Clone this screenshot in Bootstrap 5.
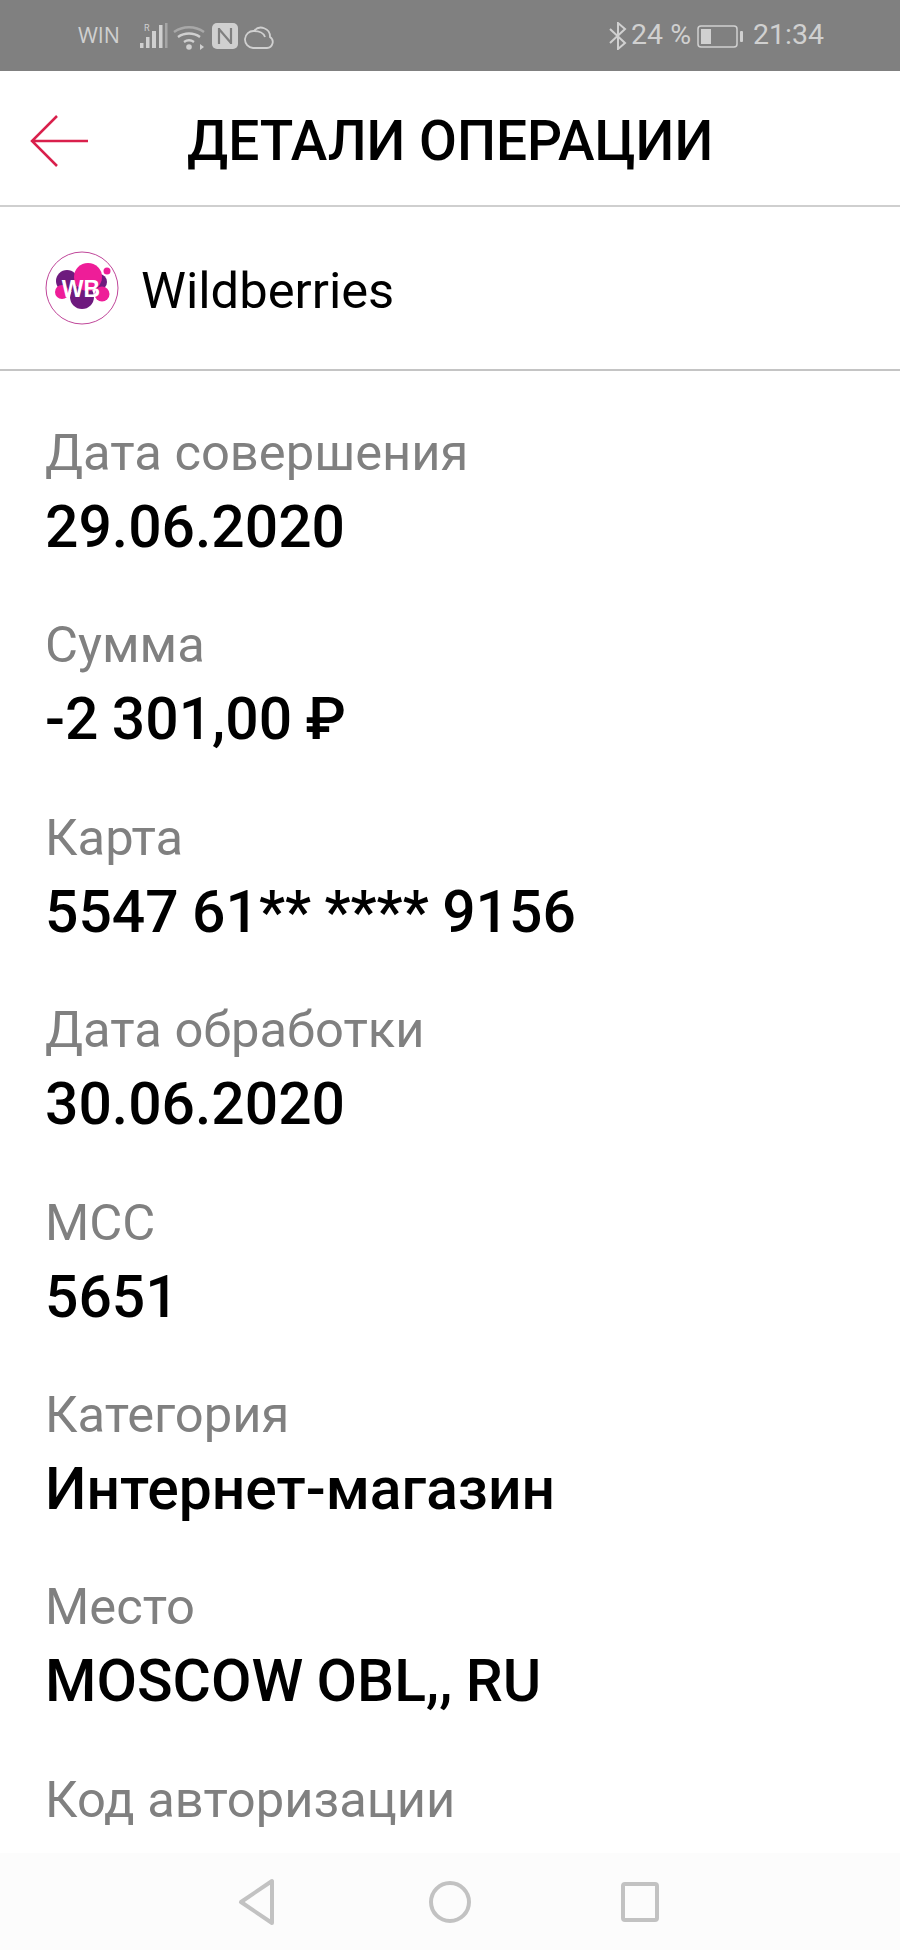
<!DOCTYPE html>
<html lang="ru">
<head>
<meta charset="utf-8">
<title>Детали операции</title>
<link href="https://cdn.jsdelivr.net/npm/bootstrap@5.3.0/dist/css/bootstrap.min.css" rel="stylesheet">
<style>
html,body{height:1950px;overflow:hidden}
body{font-family:Roboto,"Noto Sans",sans-serif;background:#fff;color:#000}
.phone{height:1950px;position:relative;overflow:hidden}
.statusbar{height:71px;background:#808080;color:#d0d0d0;padding-left:78px;padding-right:76px}
.st-win{font-family:"Open Sans",sans-serif;font-size:21.5px;margin-right:20px}
.st-right{font-size:28.5px;gap:4px}
.titlebar{height:136px;border-bottom:2px solid #cfcfcf;padding-left:30px;padding-top:6px}
.titlebar h1{font-family:Roboto,sans-serif;font-weight:500;font-size:55px;margin:0 0 0 99px;line-height:1}
.merchant{height:164px;border-bottom:2px solid #c4c4c4;padding-left:45px;gap:22px}
.merchant span{font-size:50.7px;line-height:1;padding-top:6px}
.fields{padding:55px 0 0 45px}
.field{height:192.4px}
.field-label{font-size:50.7px;line-height:54px;color:#808080}
.field-value{font-size:58.8px;line-height:62px;font-weight:500;margin-top:16px;word-spacing:-1.2px}
.navbottom{position:absolute;left:0;right:0;bottom:0;height:97px;background:#fcfcfc}
</style>
</head>
<body>
<div class="phone">
  <div class="statusbar d-flex align-items-center">
    <span class="st-win">WIN</span>
    <svg width="136" height="28" viewBox="0 0 136 28" fill="none">
      <g fill="#d0d0d0">
        <text x="4" y="9" font-size="9" font-family="Roboto">R</text>
        <rect x="0" y="21" width="3.500" height="5"/><rect x="6" y="15" width="3.500" height="11"/><rect x="12" y="9" width="4" height="17"/><rect x="19" y="3" width="3.500" height="23"/>
        <rect x="25" y="1" width="2.500" height="25" fill="#a6a6a6"/>
      </g>
      <g fill="none" stroke="#d0d0d0" stroke-width="2.400">
        <path d="M34 10a26 26 0 0 1 30 0" stroke="#a8a8a8"/>
        <path d="M38 15a19 19 0 0 1 22 0"/>
        <path d="M44 20a9 9 0 0 1 10 0"/>
      </g>
      <circle cx="49" cy="25" r="2.800" fill="#d0d0d0"/>
      <path d="M60 22l4 3-4 3z" fill="#d0d0d0"/>
      <rect x="72" y="1" width="26" height="26" rx="5" fill="#d0d0d0"/>
      <path d="M79 6v16M91 6v16M79 7l12 14" stroke="#808080" stroke-width="2.200" fill="none"/>
      <path d="M113 26h14a6 6 0 0 0 3-11 9 9 0 0 0-16-6 8.500 8.500 0 0 0-1 17zM114 9c5 0 10 2 11 6" stroke="#d0d0d0" stroke-width="1.800" fill="none"/>
    </svg>
    <div class="st-right d-flex align-items-center ms-auto">
      <svg width="18" height="28" viewBox="0 0 18 28" fill="none" stroke="#d0d0d0" stroke-width="2"><path d="M1 7l15 14-7 6V1l7 6L1 21"/></svg>
      <span>24 %</span>
      <svg class="me-1" width="50" height="24" viewBox="0 0 50 24" fill="none"><rect x="3" y="2" width="39" height="21" rx="3" stroke="#d0d0d0" stroke-width="1.500"/><rect x="6" y="5" width="10" height="15" fill="#d0d0d0"/><rect x="45" y="7" width="3" height="11" rx="1" fill="#d0d0d0"/></svg>
      <span>21:34</span>
    </div>
  </div>

  <div class="titlebar d-flex align-items-center">
    <svg width="58" height="52" viewBox="0 0 58 52" fill="none" stroke="#d9204c" stroke-width="2.500"><path d="M27 1L2 26l25 25M2 26h56"/></svg>
    <h1>ДЕТАЛИ ОПЕРАЦИИ</h1>
  </div>

  <div class="merchant d-flex align-items-center">
    <svg width="74" height="74" viewBox="0 0 74 74">
      <circle cx="37" cy="37" r="36" fill="#fff" stroke="#c0479a" stroke-width="1"/>
      <g fill="#6e1a7e"><circle cx="22" cy="30" r="11"/><circle cx="37" cy="46" r="12"/><circle cx="54" cy="31" r="8"/></g>
      <g fill="#ee1d98"><circle cx="43" cy="26" r="14"/><circle cx="17" cy="41" r="7"/><circle cx="57" cy="43" r="7.500"/><circle cx="62" cy="20" r="3.500"/></g>
      <text x="36" y="46" text-anchor="middle" font-family="Liberation Sans" font-weight="700" font-size="23" fill="#fff">WB</text>
    </svg>
    <span>Wildberries</span>
  </div>

  <div class="fields">
    <div class="field"><div class="field-label">Дата совершения</div><div class="field-value">29.06.2020</div></div>
    <div class="field"><div class="field-label">Сумма</div><div class="field-value">-2 301,00 ₽</div></div>
    <div class="field"><div class="field-label">Карта</div><div class="field-value">5547 61** **** 9156</div></div>
    <div class="field"><div class="field-label">Дата обработки</div><div class="field-value">30.06.2020</div></div>
    <div class="field"><div class="field-label">MCC</div><div class="field-value">5651</div></div>
    <div class="field"><div class="field-label">Категория</div><div class="field-value">Интернет-магазин</div></div>
    <div class="field"><div class="field-label">Место</div><div class="field-value">MOSCOW OBL,, RU</div></div>
    <div class="field"><div class="field-label">Код авторизации</div></div>
  </div>

  <div class="navbottom">
    <svg width="900" height="97" viewBox="0 0 900 97" fill="none" stroke="#c2c2c2" stroke-width="4" stroke-linejoin="round">
      <path d="M272 28v42L241 49z"/>
      <circle cx="450" cy="49" r="19"/>
      <rect x="623" y="31" width="34" height="36" rx="2"/>
    </svg>
  </div>
</div>
<script src="https://cdn.jsdelivr.net/npm/bootstrap@5.3.0/dist/js/bootstrap.bundle.min.js"></script>
</body>
</html>
